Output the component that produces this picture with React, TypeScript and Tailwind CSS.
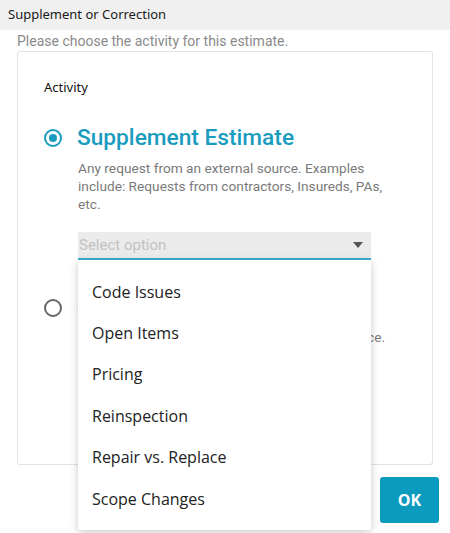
import React from "react";

const items = ["Code Issues", "Open Items", "Pricing", "Reinspection", "Repair vs. Replace", "Scope Changes"];

export default function App() {
  return (
    <div className="w-[450px] h-[533px] bg-white overflow-hidden relative" style={{ fontFamily: "Roboto, sans-serif" }}>
      <div className="h-[30px] bg-[#f0f0f0] flex items-center pl-[8px] text-[13px] text-[#1a1a1a]" style={{ fontFamily: "'Noto Sans', sans-serif" }}>
        Supplement or Correction
      </div>
      <div className="pl-[17px] pt-[2px] h-[21px] text-[14px] leading-[18px] text-[#8a8a8a]">
        Please choose the activity for this estimate.
      </div>
      <div className="mx-[17px] h-[414px] border border-[#e3e3e3] rounded-[3px] pl-[26px] pt-[26px]">
        <div className="text-[13px] leading-[18px] text-[#111]" style={{ fontFamily: "'Noto Sans', sans-serif" }}>Activity</div>
        <div className="flex items-center mt-[27px] h-[30px]">
          <div className="w-[18px] h-[18px] rounded-full border-[2.5px] border-[#1a9cbf] flex items-center justify-center">
            <div className="w-[8px] h-[8px] rounded-full bg-[#1a9cbf]" />
          </div>
          <div className="ml-[15px] text-[22.7px] leading-[30px] text-[#1a9cbf] font-medium">Supplement Estimate</div>
        </div>
        <div className="ml-[34px] mt-[6px] w-[312px] text-[13.7px] leading-[18px] text-[#7a7a7a]">
          Any request from an external source. Examples include: Requests from contractors, Insureds, PAs, etc.
        </div>
        <div className="relative ml-[34px] mt-[19px] w-[293px]">
          <div className="h-[28px] bg-[#ebebeb] border-b-2 border-[#3aaed0] flex items-center justify-between pl-[1px] pr-[8px]">
            <span className="text-[15px] text-[#c2c2c2]">Select option</span>
            <svg width="10" height="6" viewBox="0 0 10 6"><path d="M0 0h10L5 6z" fill="#555" /></svg>
          </div>
          <div className="absolute left-0 top-[28px] w-[293px] bg-white rounded-b-[3px] shadow-[0_2px_8px_rgba(0,0,0,0.22)] pt-[11px] pb-[11px] z-10" style={{ fontFamily: "'Open Sans', sans-serif" }}>
            {items.map((t) => (
              <div key={t} className="h-[41.4px] flex items-center pl-[14px] text-[16px] text-[#222]">{t}</div>
            ))}
          </div>
        </div>
        <div className="flex items-center mt-[33px] h-[30px]">
          <div className="w-[18px] h-[18px] rounded-full border-2 border-[#666]" />
          <div className="ml-[15px] text-[22.7px] leading-[30px] text-[#1a9cbf] font-medium">Correction</div>
        </div>
        <div className="ml-[34px] mt-[5px] w-[320px] text-[13.7px] leading-[18px] text-[#7a7a7a]">
          Any requests for a change from an internal source.
        </div>
      </div>
      <div className="flex justify-end pr-[11px] pt-[12px]">
        <button className="w-[59px] h-[46px] rounded-[3px] bg-[#0a9bbf] text-white text-[16px] font-bold" style={{ fontFamily: "'Open Sans', sans-serif" }}>OK</button>
      </div>
    </div>
  );
}
